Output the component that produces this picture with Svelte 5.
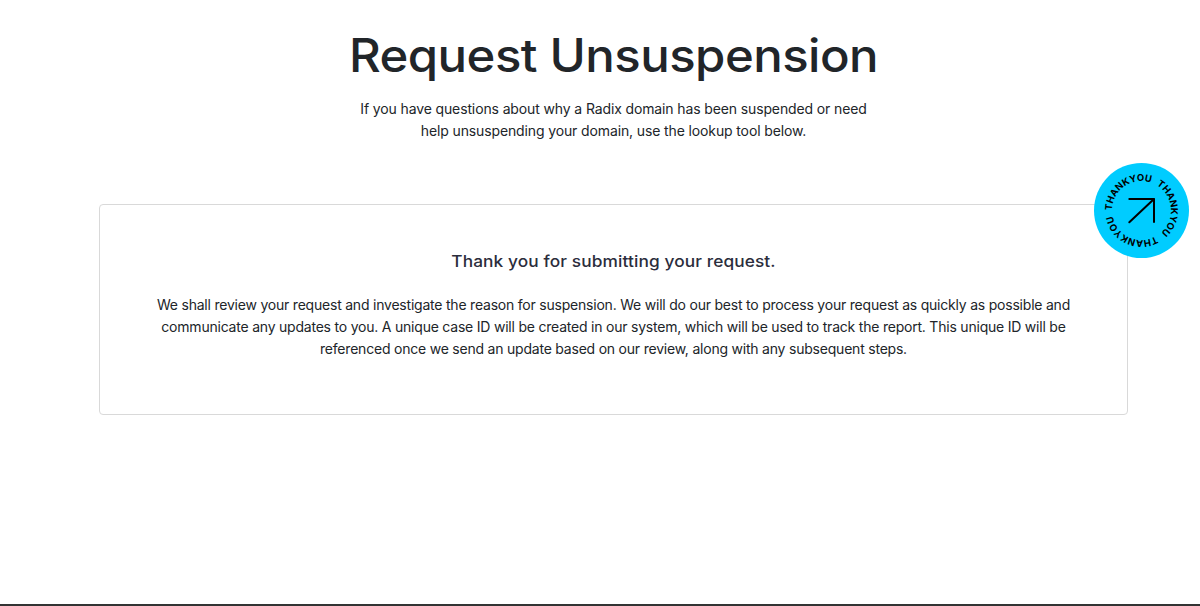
<script>
  const title = 'Request Unsuspension';
  const intro = 'If you have questions about why a Radix domain has been suspended or need help unsuspending your domain, use the lookup tool below.';
  const thanks = 'Thank you for submitting your request.';
  const body = 'We shall review your request and investigate the reason for suspension. We will do our best to process your request as quickly as possible and communicate any updates to you. A unique case ID will be created in our system, which will be used to track the report. This unique ID will be referenced once we send an update based on our review, along with any subsequent steps.';
  const ringOffsets = [0, 61.8, 123.6];
</script>

<div class="page">
  <main>
    <header class="head">
      <h1>{title}</h1>
      <p>{intro}</p>
    </header>

    <section class="card">
      <h2>{thanks}</h2>
      <p>{body}</p>
    </section>
  </main>

  <a class="badge" href="#top" aria-label="Thank you">
    <svg width="95" height="95" viewBox="0 0 95 95">
      <circle cx="47.5" cy="47.5" r="47.5" fill="#00ccff" />
      <defs>
        <path id="ring" d="M18 47.5 a29.5 29.5 0 1 1 59 0 a29.5 29.5 0 1 1 -59 0" />
      </defs>
      {#each ringOffsets as offset}
        <text class="ring-text">
          <textPath href="#ring" startOffset={offset} textLength="56" lengthAdjust="spacing">THANKYOU</textPath>
        </text>
      {/each}
      <path d="M35.3 59.3 L60 36 M35.3 36 H60 V59" fill="none" stroke="#000" stroke-width="2" stroke-linecap="round" stroke-linejoin="round" />
    </svg>
  </a>
</div>

<style>
  :global(body) {
    margin: 0;
    background: #fff;
  }

  .page {
    min-height: 606px;
    box-sizing: border-box;
    border-bottom: 2px solid #333;
    font-family: Inter, 'Liberation Sans', sans-serif;
    color: #212529;
    overflow: hidden;
  }

  main {
    width: 1029px;
    margin-left: 99px;
    padding-top: 24px;
  }

  .head {
    text-align: center;
    margin-bottom: 62px;
  }

  h1 {
    margin: 0 0 12px;
    font-size: 46px;
    line-height: 62px;
    font-weight: 500;
    letter-spacing: -0.5px;
    color: #212529;
    transform: scaleX(1.067);
  }

  .head p {
    width: 530px;
    margin: 0 auto;
    font-size: 14px;
    letter-spacing: -0.125px;
    line-height: 22px;
  }

  .card {
    box-sizing: border-box;
    height: 211px;
    padding: 45px 48px 0;
    border: 1px solid #d9d9d9;
    border-radius: 4px;
    text-align: center;
  }

  h2 {
    margin: 0 0 22px;
    font-size: 16px;
    line-height: 22px;
    font-weight: 450;
    letter-spacing: 0.1px;
    color: #2b2d3c;
    transform: scaleX(1.08);
  }

  .card p {
    margin: 0;
    font-size: 14px;
    letter-spacing: -0.215px;
    line-height: 22px;
  }

  .badge {
    position: absolute;
    left: 1094px;
    top: 163px;
    width: 95px;
    height: 95px;
  }

  .badge svg {
    display: block;
  }

  .ring-text {
    font-family: Inter, sans-serif;
    font-size: 9.5px;
    font-weight: 700;
    fill: #000;
  }
</style>
